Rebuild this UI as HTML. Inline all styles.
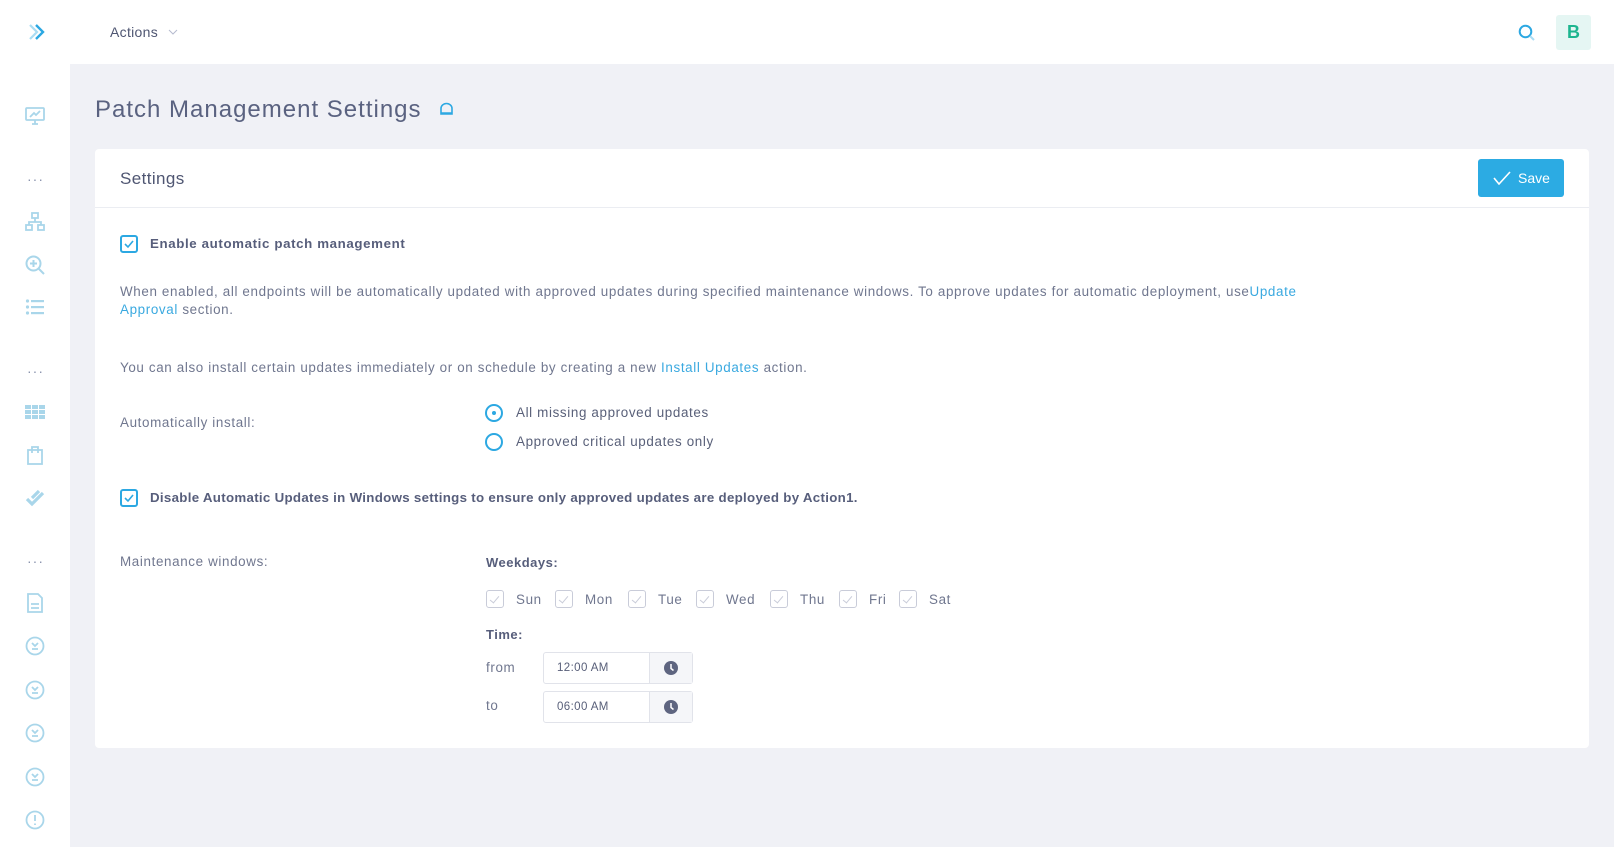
<!DOCTYPE html>
<html><head><meta charset="utf-8"><style>
*{box-sizing:border-box;margin:0;padding:0}
body{width:1614px;height:847px;background:#f0f1f6;font-family:"Liberation Sans",sans-serif;color:#646c8a;position:relative;overflow:hidden}
.abs{position:absolute}
.side{left:0;top:0;width:70px;height:847px;background:#fff}
.top{left:70px;top:0;width:1544px;height:64px;background:#fff}
.ic{position:absolute;left:23px;width:24px;height:24px}
.card{left:95px;top:149px;width:1494px;height:599px;background:#fff;border-radius:4px}
.t{position:absolute;white-space:nowrap;line-height:1}
.cb{position:absolute;width:18px;height:18px;border:2px solid #2ca8e2;border-radius:3px}
.cbg{position:absolute;width:18px;height:18px;border:1px solid #c9ccd9;border-radius:3px}
.p{font-size:13.4px;color:#70778f;letter-spacing:.64px}
a{color:#3aa9e0;text-decoration:none}
.inp{position:absolute;left:543px;width:150px;height:32px;border:1px solid #e1e3ea;border-radius:3px;font-size:11.5px;color:#575e78;letter-spacing:.4px}
.inp .b{position:absolute;right:0;top:0;width:43px;height:30px;background:#f5f6f9;border-left:1px solid #e1e3ea}
</style></head><body>
<div class="abs side">
<svg class="abs" style="left:27px;top:22px" width="20" height="20" viewBox="0 0 20 20"><path d="M3 3l7 7-7 7" stroke="#a9dcf3" stroke-width="2.2" fill="none"/><path d="M9 3l7 7-7 7" stroke="#2ca8e2" stroke-width="2.4" fill="none"/></svg>
<svg class="ic" style="top:104px" viewBox="0 0 24 24" fill="none" stroke="#a9d6ea" stroke-width="1.8"><rect x="3" y="4" width="18" height="12" rx="1"/><path d="M7 13l4-4 2 2 4-4M9 20h6M12 16v4"/></svg>
<div class="t" style="left:27px;top:172px;font-size:14px;color:#8a93ad;letter-spacing:1px">···</div>
<svg class="ic" style="top:210px" viewBox="0 0 24 24" fill="none" stroke="#a9d6ea" stroke-width="1.8"><rect x="9" y="3" width="6" height="5"/><rect x="3" y="15" width="6" height="5"/><rect x="15" y="15" width="6" height="5"/><path d="M12 8v4M6 15v-3h12v3"/></svg>
<svg class="ic" style="top:253px" viewBox="0 0 24 24" fill="none" stroke="#a9d6ea" stroke-width="2"><circle cx="10.5" cy="10.5" r="7"/><path d="M16 16l5 5M10.5 7v7M7 10.5h7"/></svg>
<svg class="ic" style="top:296px" viewBox="0 0 24 24" fill="#a9d6ea"><circle cx="4.5" cy="5" r="1.6"/><circle cx="4.5" cy="11" r="1.6"/><circle cx="4.5" cy="17" r="1.6"/><rect x="8" y="4" width="13" height="2.2"/><rect x="8" y="10" width="13" height="2.2"/><rect x="8" y="16" width="13" height="2.2"/></svg>
<div class="t" style="left:27px;top:364px;font-size:14px;color:#8a93ad;letter-spacing:1px">···</div>
<svg class="ic" style="top:400px" viewBox="0 0 24 24" fill="#a9d6ea"><rect x="2" y="5" width="6" height="4"/><rect x="9" y="5" width="6" height="4"/><rect x="16" y="5" width="6" height="4"/><rect x="2" y="10" width="6" height="4"/><rect x="9" y="10" width="6" height="4"/><rect x="16" y="10" width="6" height="4"/><rect x="2" y="15" width="6" height="4"/><rect x="9" y="15" width="6" height="4"/><rect x="16" y="15" width="6" height="4"/></svg>
<svg class="ic" style="top:443px" viewBox="0 0 24 24" fill="none" stroke="#a9d6ea" stroke-width="1.8"><rect x="5" y="7" width="14" height="14"/><path d="M9 10V4h6v6"/></svg>
<svg class="ic" style="top:487px" viewBox="0 0 24 24" fill="none" stroke="#a9d6ea" stroke-width="3.2"><path d="M4 12l5 5 11-11M9 11l7-7"/></svg>
<div class="t" style="left:27px;top:554px;font-size:14px;color:#8a93ad;letter-spacing:1px">···</div>
<svg class="ic" style="top:591px" viewBox="0 0 24 24" fill="none" stroke="#a9d6ea" stroke-width="1.8"><path d="M5 3h10l4 4v14H5z"/><path d="M8 13h8M8 17h8"/></svg>
<svg class="ic" style="top:634px" viewBox="0 0 24 24" fill="none" stroke="#a9d6ea" stroke-width="1.8"><circle cx="12" cy="12" r="8.5"/><path d="M9 9l3 3 3-3M9 15h6"/></svg>
<svg class="ic" style="top:678px" viewBox="0 0 24 24" fill="none" stroke="#a9d6ea" stroke-width="1.8"><circle cx="12" cy="12" r="8.5"/><path d="M9 9l3 3 3-3M9 15h6"/></svg>
<svg class="ic" style="top:721px" viewBox="0 0 24 24" fill="none" stroke="#a9d6ea" stroke-width="1.8"><circle cx="12" cy="12" r="8.5"/><path d="M9 9l3 3 3-3M9 15h6"/></svg>
<svg class="ic" style="top:765px" viewBox="0 0 24 24" fill="none" stroke="#a9d6ea" stroke-width="1.8"><circle cx="12" cy="12" r="8.5"/><path d="M9 9l3 3 3-3M9 15h6"/></svg>
<svg class="ic" style="top:808px" viewBox="0 0 24 24" fill="none" stroke="#a9d6ea" stroke-width="1.8"><circle cx="12" cy="12" r="8.5"/><path d="M12 7v6M12 15.5v1.5"/></svg>
</div>
<div class="abs top"></div>
<div class="t" style="left:110px;top:25px;font-size:14px;color:#4f5672;letter-spacing:.3px">Actions</div>
<svg class="abs" style="left:168px;top:29px" width="10" height="6" viewBox="0 0 10 6"><path d="M1 1l4 4 4-4" stroke="#b5bbcf" fill="none"/></svg>
<svg class="abs" style="left:1518px;top:24px" width="18" height="18" viewBox="0 0 18 18" fill="none"><circle cx="7.5" cy="7.5" r="5.8" stroke="#2ca8e2" stroke-width="2"/><path d="M12 12l4 4" stroke="#a9dcf3" stroke-width="2"/></svg>
<div class="abs" style="left:1556px;top:15px;width:35px;height:35px;background:#e5f6f3;border-radius:3px;color:#1db58f;font-weight:bold;font-size:18px;text-align:center;line-height:35px">B</div>
<div class="t" style="left:95px;top:98px;font-size:24px;color:#5a6280;letter-spacing:1px">Patch Management Settings</div>
<svg class="abs" style="left:439px;top:102px" width="15" height="14" viewBox="0 0 15 14" fill="none" stroke="#2ca8e2" stroke-width="1.6"><path d="M2 12V6.5a5.5 5 0 0 1 11 0V12zM2 11h11"/></svg>
<div class="abs card"></div>
<div class="abs" style="left:95px;top:207px;width:1494px;height:1px;background:#ebedf2"></div>
<div class="t" style="left:120px;top:170px;font-size:17px;color:#4f5672;letter-spacing:.4px">Settings</div>
<div class="abs" style="left:1478px;top:159px;width:86px;height:38px;background:#2cabe3;border-radius:3px"></div>
<svg class="abs" style="left:1493px;top:171px" width="18" height="14" viewBox="0 0 18 14"><path d="M1 7l5 6L17 1" stroke="#fff" stroke-width="1.6" fill="none"/></svg>
<div class="t" style="left:1518px;top:171px;font-size:14px;color:#fff">Save</div>

<div class="cb" style="left:120px;top:235px"><svg width="14" height="14" viewBox="0 0 14 14" style="position:absolute;left:0;top:0"><path d="M3 7l3 3 5-6" stroke="#2ca8e2" stroke-width="1.6" fill="none"/></svg></div>
<div class="t" style="left:150px;top:237px;font-size:13.3px;font-weight:bold;color:#575e7b;letter-spacing:.62px">Enable automatic patch management</div>
<div class="t p" style="left:120px;top:285px">When enabled, all endpoints will be automatically updated with approved updates during specified maintenance windows. To approve updates for automatic deployment, use<a>Update</a></div>
<div class="t p" style="left:120px;top:303px"><a>Approval</a> section.</div>
<div class="t p" style="left:120px;top:361px">You can also install certain updates immediately or on schedule by creating a new <a>Install Updates</a> action.</div>
<div class="t p" style="left:120px;top:416px">Automatically install:</div>
<div class="abs" style="left:485px;top:404px;width:18px;height:18px;border:2px solid #2ca8e2;border-radius:50%"><div class="abs" style="left:5px;top:5px;width:4px;height:4px;border-radius:50%;background:#2ca8e2"></div></div>
<div class="abs" style="left:485px;top:433px;width:18px;height:18px;border:2px solid #2ca8e2;border-radius:50%"></div>
<div class="t p" style="left:516px;top:406px;color:#596079">All missing approved updates</div>
<div class="t p" style="left:516px;top:435px;color:#596079">Approved critical updates only</div>
<div class="cb" style="left:120px;top:489px"><svg width="14" height="14" viewBox="0 0 14 14" style="position:absolute;left:0;top:0"><path d="M3 7l3 3 5-6" stroke="#2ca8e2" stroke-width="1.6" fill="none"/></svg></div>
<div class="t" style="left:150px;top:491px;font-size:13.3px;font-weight:bold;color:#575e7b;letter-spacing:.3px">Disable Automatic Updates in Windows settings to ensure only approved updates are deployed by Action1.</div>
<div class="t p" style="left:120px;top:555px">Maintenance windows:</div>
<div class="t" style="left:486px;top:556px;font-size:13px;font-weight:bold;color:#575e7b;letter-spacing:.5px">Weekdays:</div>
<div class="t" style="left:486px;top:628px;font-size:13px;font-weight:bold;color:#575e7b;letter-spacing:.5px">Time:</div>
<div class="cbg" style="left:486px;top:590px"></div><div class="t p" style="left:516px;top:593px">Sun</div>
<div class="cbg" style="left:555px;top:590px"></div><div class="t p" style="left:585px;top:593px">Mon</div>
<div class="cbg" style="left:628px;top:590px"></div><div class="t p" style="left:658px;top:593px">Tue</div>
<div class="cbg" style="left:696px;top:590px"></div><div class="t p" style="left:726px;top:593px">Wed</div>
<div class="cbg" style="left:770px;top:590px"></div><div class="t p" style="left:800px;top:593px">Thu</div>
<div class="cbg" style="left:839px;top:590px"></div><div class="t p" style="left:869px;top:593px">Fri</div>
<div class="cbg" style="left:899px;top:590px"></div><div class="t p" style="left:929px;top:593px">Sat</div>
<div class="t p" style="left:486px;top:661px">from</div>
<div class="t p" style="left:486px;top:699px">to</div>
<div class="inp" style="top:652px"><span class="t" style="left:13px;top:10px">12:00 AM</span><div class="b"><svg style="position:absolute;left:13px;top:7px" width="16" height="16" viewBox="0 0 16 16"><circle cx="8" cy="8" r="7" fill="#5e6580"/><path d="M8 4v4.5l2.5 2" stroke="#fff" stroke-width="1.5" fill="none"/></svg></div></div>
<div class="inp" style="top:691px"><span class="t" style="left:13px;top:10px">06:00 AM</span><div class="b"><svg style="position:absolute;left:13px;top:7px" width="16" height="16" viewBox="0 0 16 16"><circle cx="8" cy="8" r="7" fill="#5e6580"/><path d="M8 4v4.5l2.5 2" stroke="#fff" stroke-width="1.5" fill="none"/></svg></div></div>
<style>.cbg::after{content:"";position:absolute;left:5px;top:3px;width:4px;height:8px;border:solid #c9ccd9;border-width:0 1.5px 1.5px 0;transform:rotate(40deg)}</style>
</body></html>
